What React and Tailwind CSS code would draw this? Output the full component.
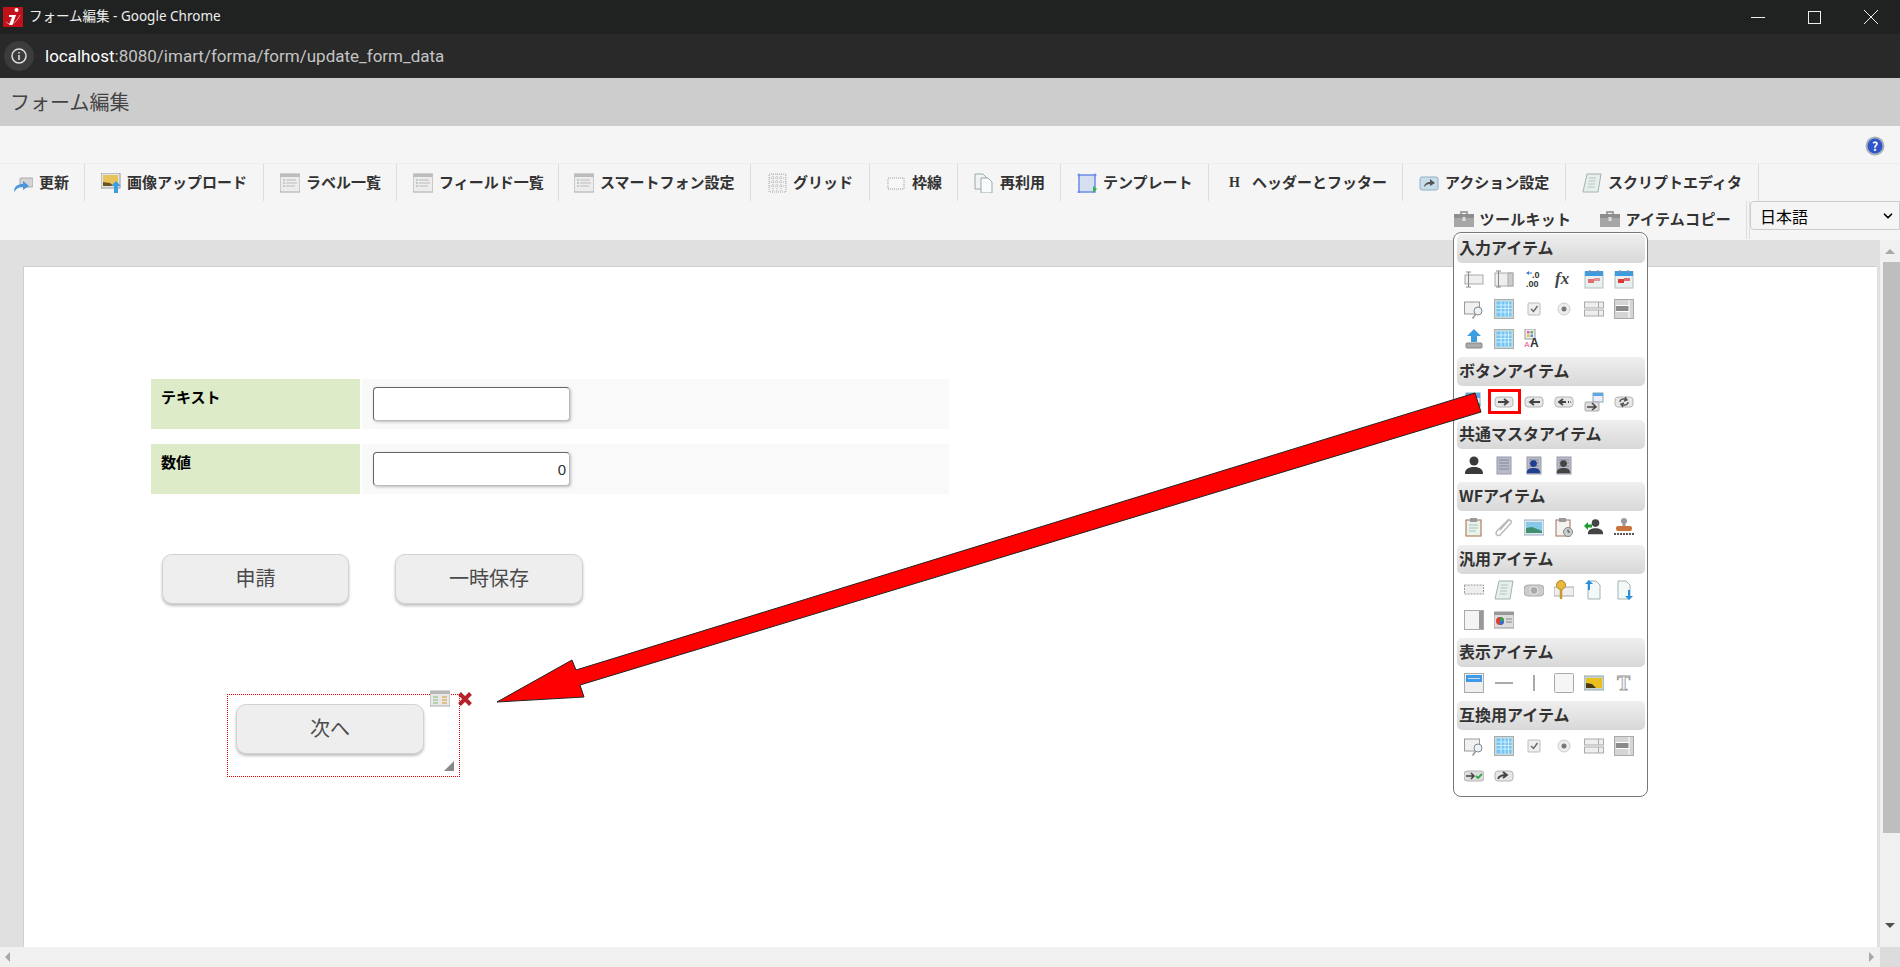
import { ChevronDown } from "lucide-react"

// every toolbar / toolkit icon is drawn on a 20x20 box
const Btn = ({ children }) => (
  <>
    <rect x="1" y="5" width="18" height="10" rx="3" fill="#e6e6e6" stroke="#b5b5b5" />
    {children}
  </>
)
const Cal = ({ c }) => (
  <>
    <rect x="1" y="3" width="18" height="16" fill="#e8efee" stroke="#b4c0c0" />
    <rect x="1" y="2" width="18" height="5" fill="#3f9be0" />
    <circle cx="6" cy="2.500" r="1.200" fill="#889" />
    <circle cx="14" cy="2.500" r="1.200" fill="#889" />
    <rect x="4" y="10" width="6" height="4" fill={c} />
    <rect x="10" y="9" width="6" height="3" fill={c} opacity="0.7" />
  </>
)
const Table = () => (
  <>
    <rect x="0.500" y="0.500" width="19" height="19" fill="#cfd8d8" stroke="#9fb0b0" />
    <rect x="2.500" y="2.500" width="15" height="15" fill="#72c6f5" />
    <path d="M2.500 6h15M2.500 9.500h15M2.500 13h15M7 2.500v15M11 2.500v15M14.500 2.500v15" stroke="#e8f6fe" strokeWidth="0.800" />
  </>
)
const Doc = ({ children }) => (
  <>
    <path d="M4 1h8l4 4v14H4z" fill="#f3f9f9" stroke="#9fb4b4" />
    {children}
  </>
)
const User = ({ c = "#3a3a3a" }) => (
  <>
    <circle cx="10" cy="6" r="4.500" fill={c} />
    <path d="M1 19c0-6 4-6 7-7h4c3 1 7 1 7 7z" fill={c} />
  </>
)
const Building = ({ children }) => (
  <>
    <rect x="3" y="2" width="14" height="17" fill="#b9bac9" stroke="#9a9aa8" />
    <path d="M5 5h10M5 8h10M5 11h10M5 14h10" stroke="#85859a" />
    {children}
  </>
)
const Scroll = () => (
  <>
    <path d="M5 1h14l-3 18H1z" fill="#e7efec" stroke="#a3b2ae" />
    <path d="M7 5h7M6.500 8h7M6 11h7M5.500 14h7" stroke="#b6c4c0" />
  </>
)
const Select2 = () => (
  <>
    <rect x="0.500" y="3" width="19" height="6" fill="#eee" stroke="#aaa" />
    <rect x="0.500" y="11" width="19" height="6" fill="#eee" stroke="#aaa" />
    <path d="M14.500 3v6M14.500 11v6" stroke="#aaa" />
  </>
)
const ListBox = () => (
  <>
    <rect x="0.500" y="0.500" width="19" height="19" fill="#d5d5d5" stroke="#aaa" />
    <rect x="2" y="7" width="13" height="5" fill="#8a8a8a" />
    <path d="M2 6.500h13M2 12.500h13M15 1v18" stroke="#fff" />
  </>
)
const Magnify = () => (
  <>
    <rect x="0.500" y="3" width="15" height="12" fill="#f0f0f0" stroke="#999" />
    <circle cx="14" cy="12" r="4" fill="#eaf3f8" stroke="#888" />
    <path d="M11.500 15.500l-3 4" stroke="#999" strokeWidth="1.600" />
  </>
)
const Check = () => (
  <>
    <rect x="4" y="4" width="12" height="12" rx="1" fill="#eee" stroke="#bbb" />
    <path d="M7 10l2.500 2.500L13.500 7" fill="none" stroke="#666" strokeWidth="1.400" />
  </>
)
const Radio = () => (
  <>
    <circle cx="10" cy="10" r="6" fill="#eee" stroke="#ccc" />
    <circle cx="10" cy="10" r="2.500" fill="#777" />
  </>
)

const shapes = {
  update: (
    <>
      <rect x="7" y="5" width="13" height="9" rx="1" fill="#d4d4d4" stroke="#aaa" />
      <path d="M1 19c0-6 4-8 9-8V8l6 5-6 4v-3c-4 0-6 1-9 5z" fill="#4c97db" />
    </>
  ),
  imgup: (
    <>
      <rect x="0" y="0" width="19" height="15" fill="#dfe7e7" stroke="#999" />
      <rect x="2" y="2" width="15" height="11" fill="#e7c45a" />
      <path d="M2 9l7 1 4 3H2z" fill="#6b5320" />
      <path d="M15 8l5 5h-3v7h-4v-7h-3z" fill="#3b9ee0" />
    </>
  ),
  list: (
    <>
      <rect x="0" y="1" width="20" height="18" fill="#ececec" stroke="#aaa" />
      <rect x="0" y="1" width="20" height="3" fill="#bdbdbd" />
      <path d="M3 7h2M3 10h2M3 13h2" stroke="#88b488" strokeWidth="1.200" />
      <path d="M6 7h10M6 10h11M6 13h9" stroke="#bbb" strokeWidth="1.200" />
    </>
  ),
  grid: (
    <>
      <rect x="2" y="1" width="17" height="18" fill="#f2f2f2" stroke="#aaa" strokeDasharray="1 1" />
      <path d="M2 5h17M2 9h17M2 13h17M6 1v18M10 1v18M14 1v18" stroke="#b5b5b5" strokeDasharray="1 1" />
    </>
  ),
  frame: <rect x="2" y="5" width="16" height="11" fill="#f8f8f8" stroke="#999" strokeDasharray="1 1" />,
  reuse: (
    <>
      <path d="M1 1h8l3 3v12H1z" fill="#eef3f3" stroke="#9aa9a9" />
      <path d="M7 5h7l4 4v11H7z" fill="#f8fbfb" stroke="#9aa9a9" />
    </>
  ),
  template: (
    <>
      <rect x="2" y="2" width="16" height="17" fill="#d6dff0" stroke="#6f8ce8" strokeWidth="1.500" />
      <circle cx="2" cy="2" r="1.500" fill="#6f8ce8" />
      <circle cx="18" cy="2" r="1.500" fill="#6f8ce8" />
      <circle cx="2" cy="19" r="1.500" fill="#6f8ce8" />
      <path d="M16 13l4 3-4 4z" fill="#35b54a" />
    </>
  ),
  action: (
    <>
      <rect x="1" y="4" width="18" height="13" rx="2" fill="#c9dcea" stroke="#8fb0c8" />
      <path d="M5 14c0-3 3-5 6-5V6l5 4-5 3v-2c-3 0-4 1-6 3z" fill="#555" />
    </>
  ),
  script: <Scroll />,
  toolbox: (
    <>
      <path d="M7 4V2h6v2" fill="none" stroke="#888" strokeWidth="1.500" />
      <rect x="0" y="4" width="20" height="13" fill="#a6a6a6" />
      <rect x="0" y="4" width="20" height="4" fill="#8e8e8e" />
      <rect x="8.500" y="7" width="3" height="4" fill="#ddd" />
    </>
  ),
  textbox: (
    <>
      <rect x="1" y="6" width="18" height="9" fill="#eee" stroke="#aaa" />
      <path d="M2 3h5M4.500 3v15M2 18h5" fill="none" stroke="#888" />
    </>
  ),
  textarea: (
    <>
      <rect x="1" y="4" width="18" height="13" fill="#eee" stroke="#aaa" />
      <path d="M2 2h5M4.500 2v16M2 18h5" fill="none" stroke="#888" />
      <rect x="14" y="4" width="5" height="13" fill="#ccc" stroke="#aaa" />
    </>
  ),
  number: (
    <>
      <path d="M2 4l3-2v4z" fill="#3b80c8" />
      <path d="M5 4h3" stroke="#3b80c8" />
      <text x="8" y="9" fontSize="9" fontFamily="Liberation Sans" fontWeight="700" fill="#333">.0</text>
      <text x="2" y="18" fontSize="9" fontFamily="Liberation Sans" fontWeight="700" fill="#333">.00</text>
    </>
  ),
  fx: <text x="1" y="15" fontSize="17" fontStyle="italic" fontFamily="Liberation Serif" fontWeight="700" fill="#444">fx</text>,
  calBlue: <Cal c="#e07070" />,
  calRed: <Cal c="#d83838" />,
  magnify: <Magnify />,
  table: <Table />,
  check: <Check />,
  radio: <Radio />,
  select: <Select2 />,
  listbox: <ListBox />,
  upload: (
    <>
      <path d="M10 0l7 7h-4v6H7V7H3z" fill="#3b9ee0" />
      <rect x="2" y="14" width="16" height="5" rx="1" fill="#aaa" stroke="#888" />
    </>
  ),
  color: (
    <>
      <rect x="1" y="0" width="10" height="10" fill="#eee" stroke="#999" />
      <rect x="3" y="2" width="2.500" height="2.500" fill="#e060a0" />
      <rect x="6.500" y="2" width="2.500" height="2.500" fill="#60b060" />
      <rect x="3" y="5.500" width="2.500" height="2.500" fill="#e8c040" />
      <rect x="6.500" y="5.500" width="2.500" height="2.500" fill="#6090e0" />
      <text x="0" y="18" fontSize="8" fontFamily="Liberation Sans" fontWeight="700" fill="#f080b0">A</text>
      <text x="6" y="18" fontSize="12" fontFamily="Liberation Sans" fontWeight="700" fill="#333">A</text>
    </>
  ),
  btnRight: (
    <Btn>
      <path d="M4 10h9M10 7l4 3-4 3" fill="none" stroke="#444" strokeWidth="1.800" />
    </Btn>
  ),
  btnLeft: (
    <Btn>
      <path d="M16 10H7M10 7l-4 3 4 3" fill="none" stroke="#444" strokeWidth="1.800" />
    </Btn>
  ),
  btnLeftDot: (
    <Btn>
      <path d="M12 10H6M9 7l-4 3 4 3M14 10h1M16.500 10h.5" fill="none" stroke="#444" strokeWidth="1.800" />
    </Btn>
  ),
  btnWindow: (
    <>
      <rect x="9" y="1" width="10" height="9" fill="#eef" stroke="#8aa" />
      <rect x="9" y="1" width="10" height="3" fill="#5aa8e8" />
      <rect x="1" y="10" width="14" height="9" rx="1" fill="#ddd" stroke="#aaa" />
      <path d="M3 15h8M8 11l4 4-4 3" fill="none" stroke="#444" strokeWidth="1.500" />
    </>
  ),
  btnRefresh: (
    <Btn>
      <path d="M6 10c0-3 4-4 7-2M14 10c0 3-4 4-7 2M11 5l2 3-3 1M9 15l-2-3 3-1" fill="none" stroke="#555" strokeWidth="1.400" />
    </Btn>
  ),
  user: <User />,
  building: <Building />,
  buildingBlue: (
    <Building>
      <g transform="translate(2 4) scale(0.75)">
        <User c="#1f3f8f" />
      </g>
    </Building>
  ),
  buildingGray: (
    <Building>
      <g transform="translate(2 4) scale(0.75)">
        <User c="#444" />
      </g>
    </Building>
  ),
  clip: (
    <>
      <rect x="2" y="3" width="15" height="16" fill="#e9f3ee" stroke="#b08060" strokeWidth="1.200" />
      <rect x="6" y="1" width="7" height="4" fill="#999" />
      <path d="M5 8h9M5 11h9M5 14h7" stroke="#a8c0b8" />
    </>
  ),
  paperclip: <path d="M15 2L3 14c-3 4 2 6 4 3l10-11c1-2-1-4-3-2L6 13" fill="none" stroke="#bbb" strokeWidth="1.500" />,
  image: (
    <>
      <rect x="0" y="3" width="20" height="15" fill="#dce8ee" stroke="#9ab" />
      <rect x="2" y="5" width="16" height="11" fill="#86c8e8" />
      <path d="M2 11l6-1 10 4v2H2z" fill="#3f8f70" />
    </>
  ),
  clipTime: (
    <>
      <rect x="2" y="3" width="14" height="16" fill="#f3f3f0" stroke="#b08878" strokeWidth="1.200" />
      <rect x="5" y="1" width="7" height="4" fill="#999" />
      <circle cx="14" cy="15" r="4.500" fill="#c8ced0" stroke="#888" />
      <path d="M14 12.500V15h2" fill="none" stroke="#444" />
    </>
  ),
  userBack: (
    <>
      <g transform="translate(3 1) scale(0.85)">
        <User c="#444" />
      </g>
      <path d="M0 9l4-4v2.500h4v3H4V13z" fill="#1f9a2f" />
    </>
  ),
  stamp: (
    <>
      <circle cx="10" cy="4" r="3" fill="#999" />
      <rect x="8.500" y="6" width="3" height="4" fill="#999" />
      <rect x="2" y="9" width="16" height="5" rx="2" fill="#c8743a" />
      <path d="M0 17h20" stroke="#555" strokeWidth="2" strokeDasharray="2 1" />
    </>
  ),
  dashed: <rect x="0.500" y="5" width="19" height="9" fill="#eee" stroke="#999" strokeDasharray="2 1" />,
  roll: (
    <>
      <rect x="0" y="5" width="20" height="11" rx="4" fill="#ccc" stroke="#aaa" />
      <circle cx="10" cy="10.500" r="4" fill="#aaa" stroke="#eee" />
    </>
  ),
  key: (
    <>
      <rect x="0" y="7" width="20" height="9" fill="#eee" stroke="#aaa" />
      <circle cx="7" cy="5" r="4.500" fill="#e8b840" stroke="#b08820" />
      <path d="M7 9v10" stroke="#c89a28" strokeWidth="2.500" />
    </>
  ),
  docUp: (
    <Doc>
      <path d="M5 0l4 4H6v6H4V4H1z" fill="#2b8fe0" />
    </Doc>
  ),
  docDown: (
    <Doc>
      <path d="M15 20l-4-4h3v-6h2v6h3z" fill="#2b8fe0" />
    </Doc>
  ),
  panel: (
    <>
      <rect x="0.500" y="0.500" width="19" height="19" fill="#f4f4f4" stroke="#aaa" />
      <rect x="15" y="1" width="4" height="18" fill="#999" />
    </>
  ),
  chart: (
    <>
      <rect x="0" y="2" width="20" height="16" fill="#ddd" stroke="#999" />
      <rect x="0" y="2" width="20" height="3" fill="#999" />
      <circle cx="6" cy="11" r="4" fill="#d84040" />
      <path d="M6 11V7a4 4 0 0 1 4 4z" fill="#30a050" />
      <path d="M6 11h4a4 4 0 0 1-4 4z" fill="#3070d0" />
      <path d="M12 9h6M12 12h6" stroke="#888" />
    </>
  ),
  header: (
    <>
      <rect x="0.500" y="0.500" width="19" height="19" fill="#eee" stroke="#aaa" />
      <rect x="2" y="2" width="16" height="7" fill="#3f9be8" />
      <path d="M4 5.500h12" stroke="#cde" />
    </>
  ),
  hline: <path d="M1 10h18" stroke="#555" strokeWidth="1" />,
  vline: <path d="M10 2v16" stroke="#555" strokeWidth="1" />,
  plain: <rect x="0.500" y="0.500" width="19" height="19" rx="1" fill="#f5f5f5" stroke="#aaa" />,
  photo: (
    <>
      <rect x="0" y="3" width="20" height="14" fill="#c5d5d5" stroke="#9aa" />
      <rect x="2" y="5" width="16" height="10" fill="#e8c020" />
      <path d="M2 10l6 1 4 4H2z" fill="#4a3a10" />
    </>
  ),
  tee: <text x="3" y="17" fontSize="20" fontFamily="Liberation Serif" fontWeight="700" fill="#f0f0f0" stroke="#999" strokeWidth="0.800">T</text>,
  btnCheck: (
    <>
      <rect x="0" y="5" width="20" height="10" rx="3" fill="#ddd" stroke="#b5b5b5" />
      <path d="M2 10h7M7 7l3 3-3 3" fill="none" stroke="#444" strokeWidth="1.500" />
      <path d="M12 10l2 2 4-4" fill="none" stroke="#35a54a" strokeWidth="1.800" />
    </>
  ),
  btnForward: (
    <Btn>
      <path d="M4 13c1-3 4-4 8-4M9 6l4 3-4 3" fill="none" stroke="#444" strokeWidth="1.800" />
    </Btn>
  ),
  windowCheck: (
    <>
      <rect x="2" y="1" width="14" height="14" fill="#eef" stroke="#8aa" />
      <rect x="2" y="1" width="14" height="5" fill="#5aa8e8" />
      <path d="M8 14l3 3 5-5" fill="none" stroke="#35a54a" strokeWidth="2" />
    </>
  ),
  tableSmall: (
    <>
      <rect x="0" y="1" width="20" height="15" fill="#e8e8e8" stroke="#aaa" />
      <rect x="0" y="1" width="20" height="3" fill="#b8b8b8" />
      <path d="M3 7h5M3 10h5M3 13h5" stroke="#a8c8a0" strokeWidth="1.500" />
      <path d="M12 7h5M12 10h5M12 13h5" stroke="#e0b070" strokeWidth="1.500" />
    </>
  ),
}

const Icon = ({ name, className = "" }) => (
  <svg viewBox="0 0 20 20" className={`w-5 h-5 shrink-0 ${className}`}>
    {shapes[name]}
  </svg>
)

const toolbar = [
  { label: "更新", icon: "update", w: "w-[85px]", pl: "pl-[13px]" },
  { label: "画像アップロード", icon: "imgup", w: "w-[179px]", pl: "pl-[16px]" },
  { label: "ラベル一覧", icon: "list", w: "w-[133px]", pl: "pl-[16px]" },
  { label: "フィールド一覧", icon: "list", w: "w-[162px]", pl: "pl-[16px]" },
  { label: "スマートフォン設定", icon: "list", w: "w-[192px]", pl: "pl-[15px]" },
  { label: "グリッド", icon: "grid", w: "w-[119px]", pl: "pl-[16px]" },
  { label: "枠線", icon: "frame", w: "w-[88px]", pl: "pl-[16px]" },
  { label: "再利用", icon: "reuse", w: "w-[103px]", pl: "pl-[16px]" },
  { label: "テンプレート", icon: "template", w: "w-[148px]", pl: "pl-[16px]" },
  { label: "ヘッダーとフッター", w: "w-[194px]", pl: "pl-[20px]" },
  { label: "アクション設定", icon: "action", w: "w-[163px]", pl: "pl-[16px]" },
  { label: "スクリプトエディタ", icon: "script", w: "w-[193px]", pl: "pl-[16px]" },
]

const sections = [
  {
    title: "入力アイテム",
    icons: ["textbox", "textarea", "number", "fx", "calBlue", "calRed", "magnify", "table", "check", "radio", "select", "listbox", "upload", "table", "color"],
    mb: "mb-[4px]",
  },
  { title: "ボタンアイテム", icons: ["windowCheck", "btnRight", "btnLeft", "btnLeftDot", "btnWindow", "btnRefresh"], mb: "mb-[4px]" },
  { title: "共通マスタアイテム", icons: ["user", "building", "buildingBlue", "buildingGray"], mb: "mb-[3px]" },
  { title: "WFアイテム", icons: ["clip", "paperclip", "image", "clipTime", "userBack", "stamp"], mb: "mb-[4px]" },
  { title: "汎用アイテム", icons: ["dashed", "script", "roll", "key", "docUp", "docDown", "panel", "chart"], mb: "mb-[4px]" },
  { title: "表示アイテム", icons: ["header", "hline", "vline", "plain", "photo", "tee"], mb: "mb-[4px]" },
  { title: "互換用アイテム", icons: ["magnify", "table", "check", "radio", "select", "listbox", "btnCheck", "btnForward"], mb: "mb-[4px]" },
]

const ToolKit = () => (
  <div className="absolute left-[1453px] top-[232px] w-[195px] h-[565px] bg-white border border-[#777] rounded-[8px] pt-[1px] pl-[3px]">
    {sections.map((s) => (
      <div key={s.title} className={s.mb}>
        <div className="w-[188px] h-[29px] rounded-[5px] bg-gradient-to-b from-[#efefef] to-[#d8d8d8] pl-[2px] text-[16px] leading-[26px] font-bold text-[#333]">
          {s.title}
        </div>
        <div className="ml-[2px] grid grid-cols-[repeat(6,30px)] auto-rows-[30px]">
          {s.icons.map((name, i) => (
            <div key={i} className="relative flex items-center justify-center">
              <Icon name={name} className="translate-y-[1px]" />
              {name === "btnRight" && <div className="absolute left-[-1px] top-[3px] w-[33px] h-[25px] border-[3px] border-[#f00]" />}
            </div>
          ))}
        </div>
      </div>
    ))}
  </div>
)

const FormRow = ({ label, value, className = "" }) => (
  <div className={`flex w-[798px] h-[50px] ${className}`}>
    <div className="w-[209px] bg-[#deebc8] pl-[10px] pt-[7px] text-[15px] leading-[22px] font-bold text-black">{label}</div>
    <div className="flex-1 ml-[2px] bg-[#f9f9f9] pl-[11px] pt-[8px]">
      <div className="w-[197px] h-[34px] bg-white border border-[#bbb] border-t-[#666] border-l-[#666] rounded-[4px] shadow-[1px_1px_3px_rgba(0,0,0,0.25)] pr-[3px] text-right text-[15px] leading-[33px] text-[#333] [font-family:'Liberation_Sans',sans-serif]">
        {value}
      </div>
    </div>
  </div>
)

const FormButton = ({ children, w = "w-[188px]" }) => (
  <div className={`${w} h-[50px] pb-[2px] flex items-center justify-center bg-[#eeeeee] border border-[#d2d2d2] rounded-[10px] shadow-[0_2px_3px_rgba(0,0,0,0.25)] text-[20px] font-normal text-[#4a4a4a]`}>
    {children}
  </div>
)

const Arrow = () => (
  <svg className="absolute inset-0 w-[1900px] h-[967px] pointer-events-none" viewBox="0 0 1900 967">
    <polygon points="497,702 572,660 576,670 1475,393 1481,412 580,685 584,697" fill="#ff0000" stroke="#222" strokeWidth="1" />
  </svg>
)

export default function App() {
  return (
    <div className="relative w-[1900px] h-[967px] overflow-hidden flex flex-col bg-white [font-family:'Noto_Sans_CJK_JP',sans-serif]">
      {/* chrome window title */}
      <div className="h-[34px] shrink-0 flex items-center bg-[#202221] pl-[3px] text-[13.5px] text-[#eeeeee] [font-family:'Noto_Sans','Noto_Sans_CJK_JP',sans-serif]">
        <svg viewBox="0 0 20 20" className="w-5 h-5 shrink-0">
          <rect width="20" height="20" fill="#c1121c" />
          <path d="M3 15c4 4 10 2 14-7" fill="none" stroke="#e88a8a" strokeWidth="1" />
          <path d="M13.500 1a2 2 0 1 1 0 4 2 2 0 0 1 0-4M6 8h7l-3.500 10H6l3-8H6z" fill="#fff" />
        </svg>
        <span className="ml-[6px] flex-1 pb-[2px]">フォーム編集 - Google Chrome</span>
        <div className="flex items-center gap-[43px] pr-[22px]">
          <div className="w-[14px] h-px bg-[#eee]" />
          <div className="w-[13px] h-[13px] border border-[#eee]" />
          <svg viewBox="0 0 14 14" className="w-[14px] h-[14px]">
            <path d="M0 0l14 14M14 0L0 14" stroke="#eee" strokeWidth="1" />
          </svg>
        </div>
      </div>

      {/* url bar */}
      <div className="h-[44px] shrink-0 flex items-center bg-[#292929] pl-[4px]">
        <div className="w-[30px] h-[30px] rounded-full bg-[#3c3c3c] flex items-center justify-center">
          <svg viewBox="0 0 16 16" className="w-4 h-4">
            <circle cx="8" cy="8" r="7" fill="none" stroke="#ddd" strokeWidth="1.500" />
            <path d="M8 7v5M8 4v1.500" stroke="#ddd" strokeWidth="1.600" />
          </svg>
        </div>
        <span className="ml-[11px] pt-[2px] text-[17px] text-[#c4c4c4] [font-family:'Roboto',sans-serif]">
          <span className="text-white">localhost</span>:8080/imart/forma/form/update_form_data
        </span>
      </div>

      {/* page title */}
      <div className="h-[48px] shrink-0 flex items-center bg-[#cdcdcd] pl-[10px] text-[20px] font-normal text-[#444]">フォーム編集</div>

      {/* toolbar */}
      <div className="h-[114px] shrink-0 bg-[#f5f5f5] flex flex-col">
        <div className="h-[38px] flex items-center justify-end pr-[15px] border-b border-[#eeeeee]">
          <svg viewBox="0 0 20 20" className="w-5 h-5 mt-[2px]">
            <circle cx="10" cy="10" r="9.500" fill="#a8b0bc" />
            <circle cx="10" cy="10" r="7.500" fill="#2f55c8" />
            <text x="10" y="14.500" textAnchor="middle" fontSize="12" fontWeight="700" fill="#fff">?</text>
          </svg>
        </div>
        <div className="h-[37px] flex">
          {toolbar.map((t) => (
            <div key={t.label} className={`${t.w} ${t.pl} h-full flex items-center border-r border-[#dddddd] text-[15px] font-bold text-[#333]`}>
              {t.icon ? (
                <Icon name={t.icon} className="mr-[6px]" />
              ) : (
                <span className="mr-[12px] text-[14px] [font-family:'Liberation_Serif',serif]">H</span>
              )}
              <span className="whitespace-nowrap">{t.label}</span>
            </div>
          ))}
        </div>
        <div className="h-[38px] flex justify-end text-[15px] font-bold text-[#333]">
          <div className="flex items-center h-[37px] self-start">
            <Icon name="toolbox" className="mr-[6px]" />
            <span className="tracking-[0.3px]">ツールキット</span>
          </div>
          <div className="flex items-center h-[37px] ml-[29px] self-start">
            <Icon name="toolbox" className="mr-[5px]" />
            <span className="tracking-[0.3px]">アイテムコピー</span>
          </div>
          <div className="ml-[15px] w-[4px] border-x border-[#dddddd]" />
          <div className="w-[150px] h-[29px] flex items-center justify-between border border-[#cccccc] rounded-l-[4px] pl-[9px] pr-[4px] text-[16px] font-normal text-black">
            <span>日本語</span>
            <ChevronDown className="w-[14px] h-[14px]" strokeWidth={3} />
          </div>
        </div>
      </div>

      {/* work area */}
      <div className="flex-1 min-h-0 flex flex-col">
        <div className="flex-1 min-h-0 flex">
          <div className="w-[1880px] bg-[#e0e0e0] pt-[26px] pl-[23px] pr-[3px]">
            <div className="h-full bg-white border-t border-l border-[#cfcfcf] pl-[127px] pt-[112px]">
              <FormRow label="テキスト" />
              <FormRow label="数値" value="0" className="mt-[15px]" />
              <div className="flex ml-[11px] mt-[60px] gap-[46px]">
                <FormButton w="w-[187px]">申請</FormButton>
                <FormButton>一時保存</FormButton>
              </div>
              <div className="relative w-[233px] h-[83px] ml-[76px] mt-[90px] border border-dotted border-[#e00000] pl-[8px] pt-[9px]">
                <FormButton>次へ</FormButton>
                <svg viewBox="0 0 10 10" className="absolute left-[216px] top-[66px] w-[10px] h-[10px]">
                  <path d="M10 0v10H0z" fill="#888" />
                </svg>
                <Icon name="tableSmall" className="absolute left-[202px] top-[-5px]" />
                <svg viewBox="0 0 16 16" className="absolute left-[229px] top-[-4px] w-4 h-4">
                  <path d="M2.500 2.500l11 11M13.500 2.500l-11 11" stroke="#b5222a" strokeWidth="4" />
                </svg>
              </div>
            </div>
          </div>
          <div className="w-[20px] bg-[#f0f0f0] flex flex-col items-center">
            <div className="h-[22px] flex items-center">
              <div className="w-0 h-0 border-x-[5px] border-x-transparent border-b-[5px] border-b-[#a8a8a8]" />
            </div>
            <div className="w-[17px] h-[571px] ml-[2px] bg-[#bebebe]" />
            <div className="flex-1" />
            <div className="h-[24px] flex items-start">
              <div className="w-0 h-0 border-x-[5px] border-x-transparent border-t-[5px] border-t-[#505050]" />
            </div>
          </div>
        </div>
        <div className="h-[20px] shrink-0 flex bg-[#f0f0f0]">
          <div className="w-[1880px] flex items-center justify-between px-[5px]">
            <div className="w-0 h-0 border-y-[5px] border-y-transparent border-r-[5px] border-r-[#a8a8a8]" />
            <div className="w-0 h-0 mr-[1px] border-y-[5px] border-y-transparent border-l-[5px] border-l-[#a8a8a8]" />
          </div>
          <div className="w-[20px] bg-[#dcdcdc]" />
        </div>
      </div>

      <ToolKit />
      <Arrow />
    </div>
  )
}
